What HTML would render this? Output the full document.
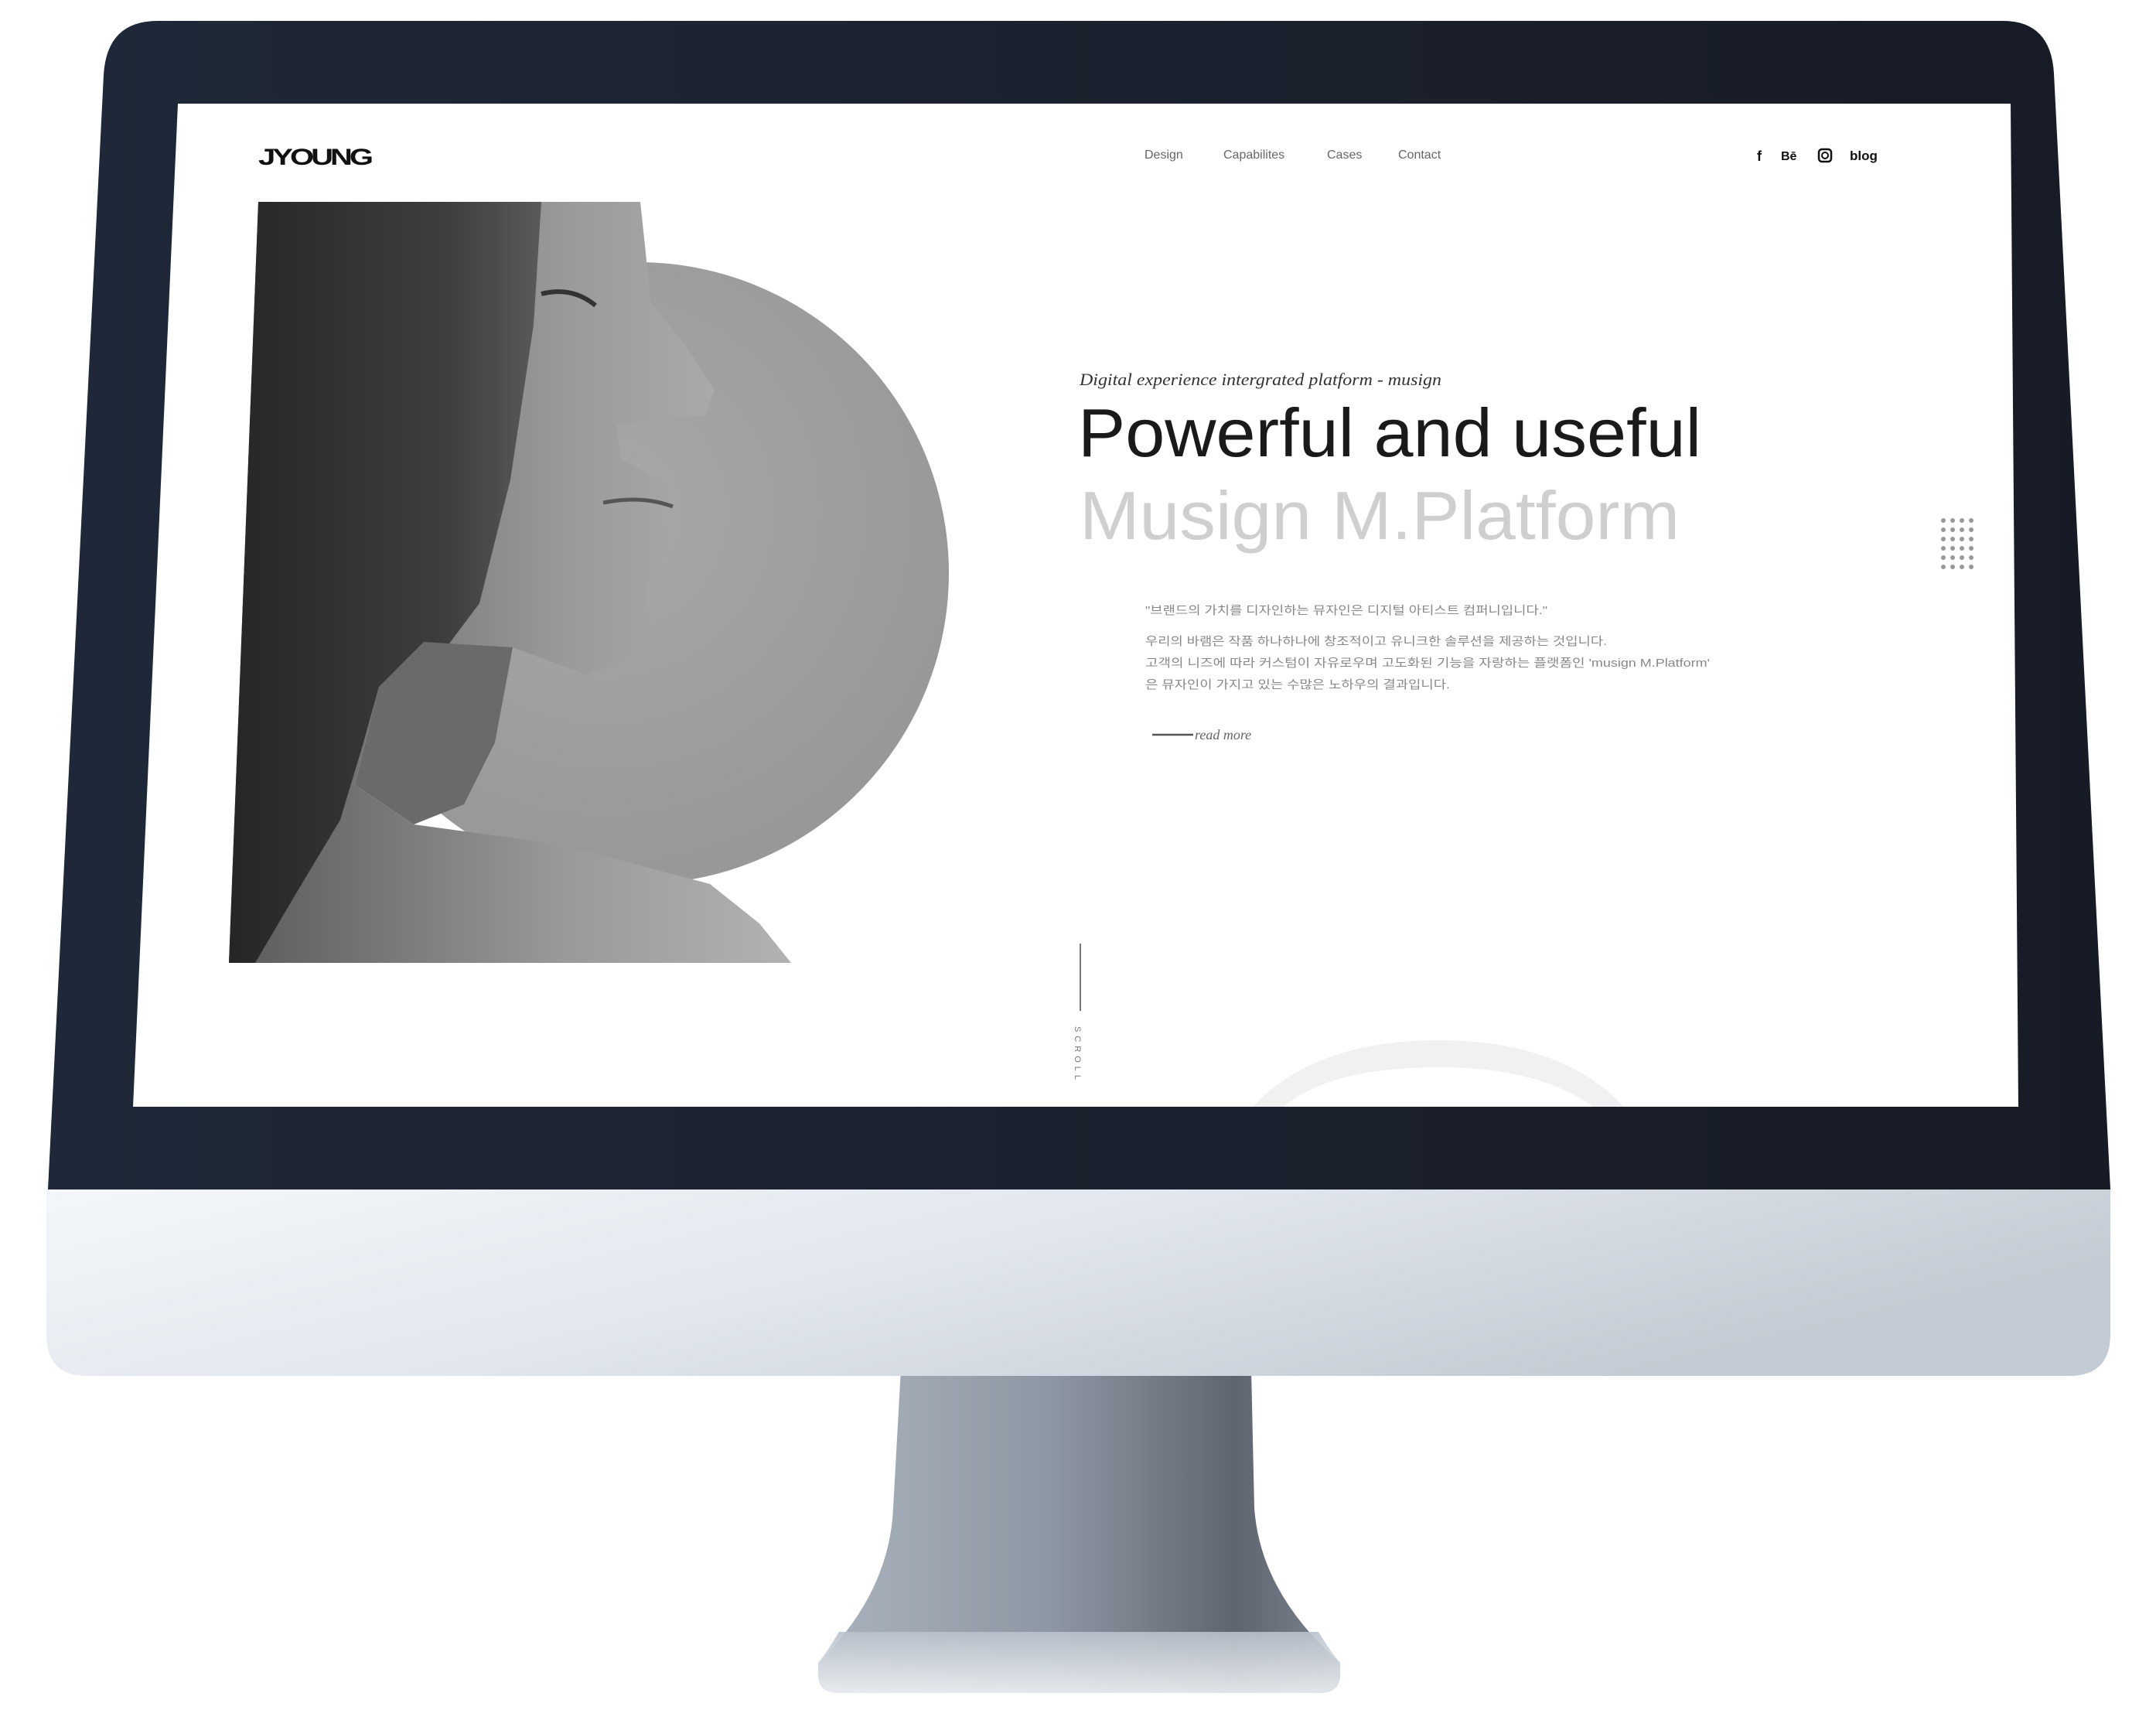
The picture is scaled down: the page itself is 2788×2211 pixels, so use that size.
<!DOCTYPE html>
<html><head><meta charset="utf-8"><style>
html,body{margin:0;padding:0;background:#fff;}
body{width:2788px;height:2211px;overflow:hidden;position:relative;}
svg{position:absolute;left:0;top:0;}
</style></head><body>
<svg width="2788" height="2211" viewBox="0 0 2788 2211">
<defs>
<linearGradient id="chin" x1="0" y1="0" x2="1" y2="0.4">
<stop offset="0" stop-color="#f4f7fa"/><stop offset="0.5" stop-color="#e2e7ee"/><stop offset="1" stop-color="#c4cbd4"/></linearGradient>
<linearGradient id="stand" x1="0" y1="0" x2="1" y2="0">
<stop offset="0" stop-color="#aab3bd"/><stop offset="0.45" stop-color="#8d97a3"/><stop offset="0.8" stop-color="#5f6570"/><stop offset="1" stop-color="#7d8590"/></linearGradient>
<linearGradient id="base" x1="0" y1="0" x2="0" y2="1">
<stop offset="0" stop-color="#b9c1cb"/><stop offset="1" stop-color="#eef1f4"/></linearGradient>
<linearGradient id="bez" x1="0" y1="0" x2="1" y2="0">
<stop offset="0" stop-color="#1f2838"/><stop offset="1" stop-color="#171b25"/></linearGradient>
<radialGradient id="circ" cx="0.45" cy="0.4" r="0.7">
<stop offset="0" stop-color="#a8a8a8"/><stop offset="1" stop-color="#959595"/></radialGradient>
<linearGradient id="skin" x1="0" y1="0" x2="1" y2="0">
<stop offset="0" stop-color="#5a5a5a"/><stop offset="0.6" stop-color="#9a9a9a"/><stop offset="1" stop-color="#b2b2b2"/></linearGradient>
<linearGradient id="hair" x1="0" y1="0" x2="1" y2="0">
<stop offset="0" stop-color="#262626"/><stop offset="0.7" stop-color="#3e3e3e"/><stop offset="1" stop-color="#5a5a5a"/></linearGradient>
</defs>
<!-- stand -->
<path d="M1165,1770 L1618,1770 L1622,1950 Q1630,2060 1733,2150 L1733,2165 Q1733,2189 1705,2189 L1085,2189 Q1058,2189 1058,2165 L1058,2150 Q1150,2060 1155,1950 Z" fill="url(#stand)"/>
<path d="M1085,2110 L1705,2110 Q1720,2135 1733,2150 L1733,2165 Q1733,2189 1705,2189 L1085,2189 Q1058,2189 1058,2165 L1058,2150 Q1070,2135 1085,2110 Z" fill="url(#base)" opacity="0.9"/>
<!-- chin -->
<path d="M60,1530 L2729,1530 L2729,1725 Q2729,1779 2676,1779 L112,1779 Q60,1779 60,1725 Z" fill="url(#chin)"/>
<!-- bezel -->
<path d="M204,27 L2590,27 Q2652,27 2656,95 L2729,1538 L62,1538 L134,97 Q138,27 204,27 Z" fill="url(#bez)"/>
<!-- screen -->
<polygon points="230,134 2600,134 2610,1431 172,1431" fill="#fff"/>
<path d="M1620,1431 Q1700,1345 1860,1345 Q2020,1345 2100,1431 L2060,1431 Q1990,1380 1860,1380 Q1720,1380 1660,1431 Z" fill="#f1f1f1"/>
<!-- circle -->
<circle cx="825" cy="741" r="402" fill="url(#circ)"/>
<!-- photo -->
<path d="M334,261 L828,261 L835,327 L841,390 L892,454 L924,505 L911,537 L854,543 L797,550 L803,594 L879,633 L854,665 L867,709 L835,754 L835,811 L809,856 L758,872 L663,837 L548,830 L490,888 L459,1015 L535,1066 L726,1092 L918,1143 L982,1194 L1023,1245 L296,1245 Z" fill="url(#skin)"/>
<path d="M334,261 L700,261 L690,420 L660,620 L620,780 L560,860 L490,888 L470,960 L440,1060 L380,1160 L330,1245 L296,1245 Z" fill="url(#hair)"/>
<path d="M490,888 L548,830 L663,837 L640,960 L600,1040 L535,1066 L459,1015 Z" fill="#6a6a6a"/>
<path d="M700,380 Q740,370 770,395" stroke="#333" stroke-width="6" fill="none"/>
<path d="M780,650 Q830,640 870,655" stroke="#555" stroke-width="5" fill="none"/>
<!-- header -->
<text x="334" y="213" font-family="Liberation Sans, sans-serif" font-size="30" font-weight="bold" fill="#111" letter-spacing="-3" textLength="145" lengthAdjust="spacingAndGlyphs">JYOUNG</text>
<g font-family="Liberation Sans, sans-serif" font-size="16" fill="#666">
<text x="1480" y="205">Design</text>
<text x="1582" y="205">Capabilites</text>
<text x="1716" y="205">Cases</text>
<text x="1808" y="205">Contact</text>
</g>
<g font-family="Liberation Sans, sans-serif" font-size="18" font-weight="bold" fill="#111">
<text x="2272" y="208">f</text>
<text x="2303" y="207" font-size="16">Bē</text>
<rect x="2352" y="193" width="16" height="16" rx="4" fill="none" stroke="#111" stroke-width="2.5"/><circle cx="2360" cy="201" r="4" fill="none" stroke="#111" stroke-width="2"/>
<text x="2392" y="207" font-size="17">blog</text>
</g>
<!-- hero text -->
<text x="1396" y="498" font-family="Liberation Serif, serif" font-style="italic" font-size="22" fill="#333" textLength="468" lengthAdjust="spacingAndGlyphs">Digital experience intergrated platform - musign</text>
<text x="1394" y="590" font-family="Liberation Sans, sans-serif" font-size="88" fill="#1a1a1a" textLength="806" lengthAdjust="spacingAndGlyphs">Powerful and useful</text>
<text x="1396" y="697" font-family="Liberation Sans, sans-serif" font-size="88" fill="#cfcfcf" textLength="776" lengthAdjust="spacingAndGlyphs">Musign M.Platform</text>
<g font-family="Liberation Sans, 'Noto Sans CJK KR', sans-serif" font-size="15" fill="#888">
<text x="1481" y="794" textLength="520" lengthAdjust="spacingAndGlyphs">"브랜드의 가치를 디자인하는 뮤자인은 디지털 아티스트 컴퍼니입니다."</text>
<text x="1481" y="834" textLength="597" lengthAdjust="spacingAndGlyphs">우리의 바램은 작품 하나하나에 창조적이고 유니크한 솔루션을 제공하는 것입니다.</text>
<text x="1481" y="862" textLength="730" lengthAdjust="spacingAndGlyphs">고객의 니즈에 따라 커스텀이 자유로우며 고도화된 기능을 자랑하는 플랫폼인 'musign M.Platform'</text>
<text x="1481" y="890" textLength="394" lengthAdjust="spacingAndGlyphs">은 뮤자인이 가지고 있는 수많은 노하우의 결과입니다.</text>
</g>
<line x1="1490" y1="950" x2="1543" y2="950" stroke="#555" stroke-width="2.5"/>
<text x="1545" y="956" font-family="Liberation Serif, serif" font-style="italic" font-size="18" fill="#666">read more</text>
<!-- dots -->
<g fill="#999">
<circle cx="2513" cy="673" r="3"/><circle cx="2525" cy="673" r="3"/><circle cx="2537" cy="673" r="3"/><circle cx="2549" cy="673" r="3"/>
<circle cx="2513" cy="685" r="3"/><circle cx="2525" cy="685" r="3"/><circle cx="2537" cy="685" r="3"/><circle cx="2549" cy="685" r="3"/>
<circle cx="2513" cy="697" r="3"/><circle cx="2525" cy="697" r="3"/><circle cx="2537" cy="697" r="3"/><circle cx="2549" cy="697" r="3"/>
<circle cx="2513" cy="709" r="3"/><circle cx="2525" cy="709" r="3"/><circle cx="2537" cy="709" r="3"/><circle cx="2549" cy="709" r="3"/>
<circle cx="2513" cy="721" r="3"/><circle cx="2525" cy="721" r="3"/><circle cx="2537" cy="721" r="3"/><circle cx="2549" cy="721" r="3"/>
<circle cx="2513" cy="733" r="3"/><circle cx="2525" cy="733" r="3"/><circle cx="2537" cy="733" r="3"/><circle cx="2549" cy="733" r="3"/>
</g>
<!-- scroll -->
<line x1="1397" y1="1220" x2="1397" y2="1307" stroke="#777" stroke-width="2"/>
<text x="1390" y="1327" transform="rotate(90 1390 1327)" font-family="Liberation Sans, sans-serif" font-size="11" fill="#777" letter-spacing="5">SCROLL</text>
</svg>
</body></html>
